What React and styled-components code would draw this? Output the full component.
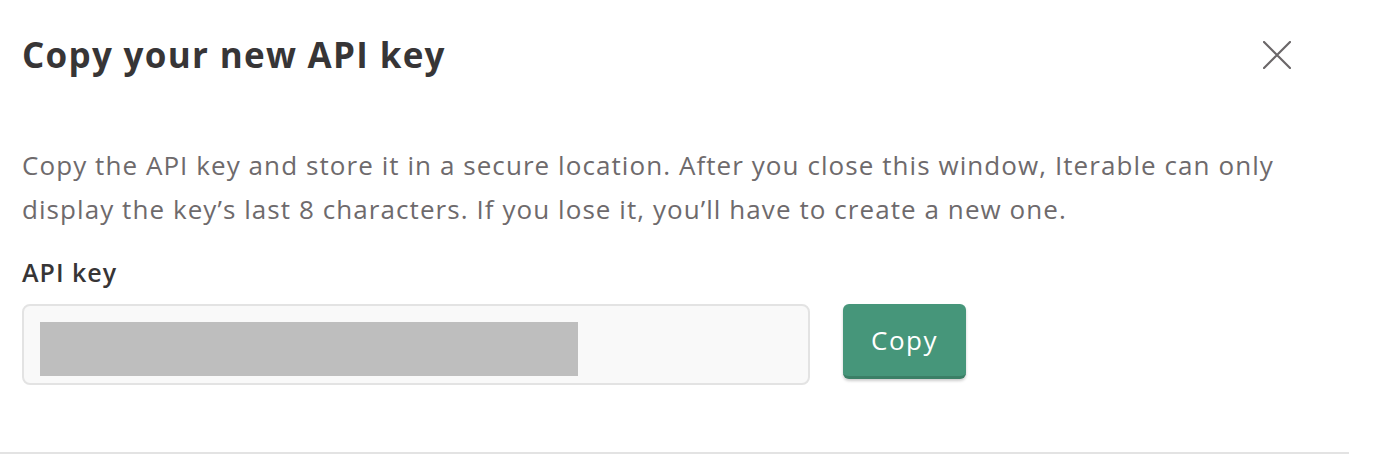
import React from 'react';
import styled, { createGlobalStyle } from 'styled-components';

const GlobalStyle = createGlobalStyle`
    body {
        margin: 0;
        background: #ffffff;
        font-family: "Open Sans", "Noto Sans", sans-serif;
    }
`;

const Modal = styled.div`
    width: 1349px;
    background: #ffffff;
`;

const Header = styled.div`
    display: flex;
    justify-content: space-between;
    align-items: center;
    padding: 34px 58px 0 22px;
`;

const Title = styled.h2`
    margin: 0;
    font-size: 35px;
    line-height: 42px;
    font-weight: 700;
    letter-spacing: 1.3px;
    color: #373536;
`;

const CloseButton = styled.button`
    display: flex;
    width: 28px;
    height: 28px;
    padding: 0;
    border: 0;
    background: none;
    cursor: pointer;
`;

const Body = styled.div`
    padding: 67px 22px 67px 22px;
`;

const Text = styled.p`
    margin: 0;
    max-width: 1290px;
    font-size: 26px;
    line-height: 44px;
    letter-spacing: 1.07px;
    color: #6e6a6c;
`;

const Label = styled.div`
    margin-top: 25px;
    font-size: 25px;
    line-height: 32px;
    font-weight: 600;
    letter-spacing: 1px;
    color: #373536;
`;

const KeyRow = styled.div`
    display: flex;
    align-items: flex-start;
    gap: 33px;
    margin-top: 16px;
`;

const KeyField = styled.div`
    box-sizing: border-box;
    width: 788px;
    height: 81px;
    padding: 16px 16px 7px;
    border: 2px solid #e3e3e3;
    border-radius: 8px;
    background: #f9f9f9;
`;

const Redacted = styled.div`
    width: ${p => p.width}px;
    height: 54px;
    background: #bebebe;
`;

const Button = styled.button`
    box-sizing: border-box;
    width: 123px;
    height: 75px;
    border: 0;
    border-bottom: 3px solid #3b7f66;
    border-radius: 6px;
    background-color: #46967a;
    box-shadow: 0 2px 3px rgba(0, 0, 0, 0.2);
    color: #ffffff;
    font-family: "Open Sans", "Noto Sans", sans-serif;
    font-size: 26px;
    font-weight: 500;
    letter-spacing: 1.5px;
    cursor: pointer;
`;

const Divider = styled.hr`
    margin: 0;
    border: 0;
    height: 2px;
    background: #e3e3e3;
`;

const App = () => {
    return (
        <>
            <GlobalStyle />
            <Modal>
                <Header>
                    <Title>Copy your new API key</Title>
                    <CloseButton aria-label="Close">
                        <svg width="28" height="28" viewBox="0 0 28 28">
                            <path d="M1 1L27 27M27 1L1 27" stroke="#6b6769" strokeWidth="2.2" strokeLinecap="round" />
                        </svg>
                    </CloseButton>
                </Header>
                <Body>
                    <Text>
                        Copy the API key and store it in a secure location. After you close this window, Iterable can only
                        display the key’s last 8 characters. If you lose it, you’ll have to create a new one.
                    </Text>
                    <Label>API key</Label>
                    <KeyRow>
                        <KeyField>
                            <Redacted width={538} />
                        </KeyField>
                        <Button>Copy</Button>
                    </KeyRow>
                </Body>
                <Divider />
            </Modal>
        </>
    );
};

export default App;
